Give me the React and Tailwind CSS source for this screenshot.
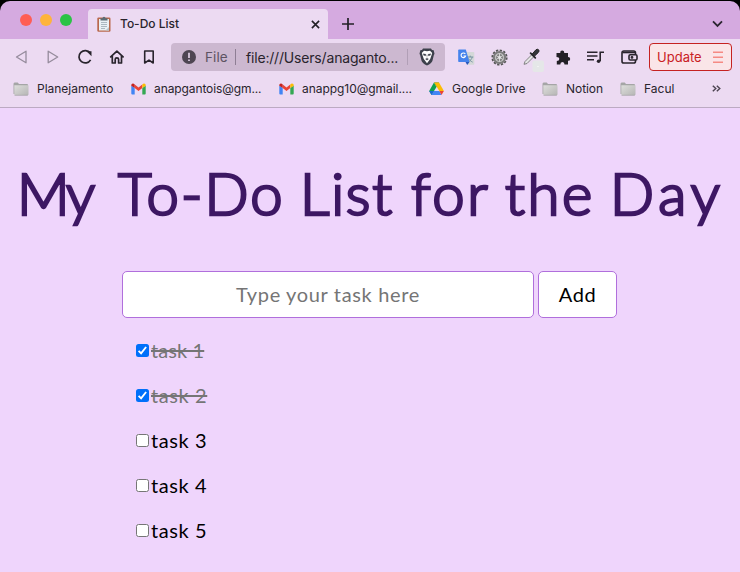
import React from "react";

const titleWords = [
  { text: "My", cls: "w-[101px] tracking-[-3px]" },
  { text: "To-Do", cls: "w-[182px] tracking-[2.1px]" },
  { text: "List", cls: "w-[111px] tracking-[1.8px]" },
  { text: "for", cls: "w-[94px] tracking-[2.6px]" },
  { text: "the", cls: "w-[105px] tracking-[2.6px]" },
  { text: "Day", cls: "w-[114px] tracking-[5px]" },
];

const tasks = [
  { text: "task 1", done: true },
  { text: "task 2", done: true },
  { text: "task 3", done: false },
  { text: "task 4", done: false },
  { text: "task 5", done: false },
];

function Clipboard() {
  return (
    <svg width="14" height="16" viewBox="0 0 14 16" className="shrink-0">
      <rect x=".3" y="1.5" width="13.2" height="14.2" rx="1.2" fill="#b9694d" />
      <path d="M2 3h10v11.5H2z" fill="#e9f0f4" />
      <path d="M8.5 14.5 12 11v3.5z" fill="#b9c5cb" />
      <path d="M3.5 4.5V2.2h2a1.5 1.5 0 0 1 3 0h2v2.3z" fill="#5c6d75" />
      <path d="M4 6.5h6M4 8.5h6M4 10.5h6M4 12.5h4" stroke="#9aaab2" strokeWidth=".8" />
    </svg>
  );
}

function Folder() {
  return (
    <svg width="16" height="14" viewBox="0 0 16 14" className="shrink-0">
      <defs>
        <linearGradient id="folder" x1="0" y1="0" x2="1" y2="1">
          <stop offset="0" stopColor="#dededc" />
          <stop offset="1" stopColor="#b5b5b4" />
        </linearGradient>
      </defs>
      <path d="M.5 2q0-1.5 1.2-1.5h3L6 2h8q1 0 1 1v9H.5z" fill="#a5a5a6" />
      <path d="M1.3 3.2h14.2v9q0 1-1 1H2.3q-1 0-1-1z" fill="url(#folder)" />
      <path d="M1.5 13.3h13.3" stroke="#99999a" strokeWidth=".6" />
    </svg>
  );
}

function Gmail() {
  return (
    <svg width="15" height="12" viewBox="0 0 15 12" className="shrink-0">
      <path d="M.3 2.5 3.7 5v6.4H1.2a.9.9 0 0 1-.9-.9z" fill="#4285f4" />
      <path d="M11.3 5l3.4-2.5v8a.9.9 0 0 1-.9.9h-2.5z" fill="#34a853" />
      <path d="M3.7 1.6 7.5 4.5l3.8-2.9V5L7.5 8 3.7 5z" fill="#ea4335" />
      <path d="M.3 2.5C.3.5 2.3-.1 3.7 1.6V5L.3 2.7z" fill="#c5221f" />
      <path d="M14.7 2.5c0-2-2-2.6-3.4-.9V5l3.4-2.3z" fill="#fbbc04" />
    </svg>
  );
}

function Drive() {
  return (
    <svg width="15" height="14" viewBox="0 0 15 14" className="shrink-0">
      <path d="M5 .5h5L7.5 5z" fill="#188038" />
      <path d="M5 .5 .2 9l2.3 4L7.5 5z" fill="#0fa14f" />
      <path d="M10 .5H5.1L10.3 9h4.6z" fill="#fcbc05" />
      <path d="M4.8 9h5.5l2.2 4h-10z" fill="#4285f4" />
      <path d="M10.3 9h4.6l-2.4 4z" fill="#ea4335" />
      <path d="M.2 9h4.7l-2.4 4z" fill="#1967d2" />
    </svg>
  );
}

function Translate() {
  return (
    <svg width="17" height="17" viewBox="0 0 17 17">
      <path d="M6 3h9.5q.8 0 .8.8V15q0 .8-.8.8H10z" fill="#d4d8d8" />
      <path d="M9.5 8h5.8M12.2 6.6V8m2 0c-.4 2.2-2 3.8-3.8 4.9M10.6 9.5c.8 1.6 2.2 2.8 4 3.6" stroke="#7593a0" fill="none" />
      <path d="M1 .5h6.8L11.5 13H1q-.8 0-.8-.8v-11Q.2.5 1 .5z" fill="#4583ec" />
      <path d="M7.5 13h4l-2.3 3z" fill="#2858bc" />
      <path d="M7.3 5A2.3 2.3 0 1 0 7.6 7H5.5" stroke="#fff" strokeWidth="1.1" fill="none" />
    </svg>
  );
}

function Gear() {
  return (
    <svg width="17" height="17" viewBox="0 0 17 17">
      <circle cx="8.5" cy="8.5" r="7.2" fill="none" stroke="#555" strokeWidth="1.8" strokeDasharray="2.3 1.47" />
      <circle cx="8.5" cy="8.5" r="5.6" fill="#c4c4c4" stroke="#7c7c7c" strokeWidth="2" />
      <circle cx="8.5" cy="8.5" r="3.1" fill="#868686" stroke="#6b6b6b" strokeWidth=".7" />
      <path d="M8.5 4.2v8.6M4.8 6.4l7.4 4.2m0-4.2-7.4 4.2" stroke="#d2d2d2" strokeWidth="1" />
      <circle cx="8.5" cy="8.5" r="1.4" fill="#e4e4e4" />
    </svg>
  );
}

function Dropper() {
  return (
    <svg width="22" height="24" viewBox="0 0 22 24">
      <rect x="9.5" y="12.5" width="11.5" height="11.5" rx="2" fill="#e5e7e8" />
      <circle cx="15" cy="18.5" r=".6" fill="#fff" />
      <path d="M1 16.3 2 13.5l7-7 2 2-7 7z" fill="#e5e5e6" stroke="#777" strokeWidth=".9" />
      <path d="m7.6 5.2 4.7 4.7" stroke="#26282b" strokeWidth="1.8" strokeLinecap="round" />
      <path d="m9.3 6 3.4-4q1.5-1.5 2.8-.3t-.2 2.8L11.6 8z" fill="#33363a" stroke="#222" />
    </svg>
  );
}

function Shield() {
  return (
    <svg width="16" height="18" viewBox="0 0 16 18" className="shrink-0">
      <path d="M4 .5h8l1 1.4 1.7.4.8 3.4-.7 1.6-1.4 5.6Q12.7 14.9 8 17.6 3.3 14.9 2.6 12.9L1.2 7.3.5 5.7l.8-3.4L3 1.9z" fill="#3c404b" />
      <path d="m5 2.7 3 .6 3-.6 2.2 2.2-.7 2.4-1.3 3.6L8 15.3l-3.2-4.4-1.3-3.6-.7-2.4z" fill="#fff" />
      <path d="m4.3 5.7 2.5.6.5 1-1.2.5-1.5-.6zM11.7 5.7l-2.5.6-.5 1 1.2.5 1.5-.6zM6.5 11 8 10.3l1.5.7L8 12.2zM8 7.4v2.8" fill="#3c404b" stroke="#3c404b" strokeWidth=".3" />
    </svg>
  );
}

function TabStrip() {
  return (
    <div className="flex h-[39px] bg-black">
      <div className="mt-px flex h-[38px] w-full rounded-t-[10px] bg-[#d5aae0]">
        <div className="flex gap-2 pt-[13px] pl-5">
          <span className="size-3 rounded-full bg-[#ff5d55]" />
          <span className="size-3 rounded-full bg-[#feb43c]" />
          <span className="size-3 rounded-full bg-[#2bc346]" />
        </div>
        <div className="mt-2 ml-4 flex h-[30px] w-60 items-center rounded-t bg-[#ecdaf2] pl-[9px]">
          <Clipboard />
          <span className="ml-[9px] w-[191px] text-[12px] font-medium tracking-[-0.02px]">To-Do List</span>
          <svg width="9" height="9" viewBox="0 0 9 9" className="shrink-0">
            <path d="m.9.9 7.2 7.2M8.1.9.9 8.1" stroke="#232026" strokeWidth="1.6" />
          </svg>
        </div>
        <svg width="12" height="12" viewBox="0 0 12 12" className="mt-[17px] ml-[14px]">
          <path d="M6 0v12M0 6h12" stroke="#232026" strokeWidth="1.7" />
        </svg>
        <svg width="11" height="8" viewBox="0 0 11 8" className="mt-[19px] mr-[17px] ml-auto">
          <path d="m1 1.4 4.5 4.5L10 1.4" stroke="#2b2530" strokeWidth="1.8" fill="none" />
        </svg>
      </div>
    </div>
  );
}

function Toolbar() {
  return (
    <div className="flex h-9 items-center text-[#29242d]">
      <svg width="154" height="36" viewBox="0 0 154 36" fill="none" className="mr-[17px] shrink-0">
        <path d="M26 12.2v11.6L16.5 18z" stroke="#958b9c" strokeWidth="1.3" strokeLinejoin="round" />
        <path d="M48.2 12.2v11.6l9.5-5.8z" stroke="#958b9c" strokeWidth="1.3" strokeLinejoin="round" />
        <path d="M90.2 14.1a6.2 6.2 0 1 0 .4 6.7" stroke="#29242d" strokeWidth="1.7" />
        <path d="M86.5 12.2h5v5z" fill="#29242d" />
        <path d="m110.7 17.8 6.2-5.7 6.2 5.7m-10.8-1v7.2h2.9v-3.7q0-1.4 1.7-1.4t1.7 1.4V24h2.9v-7.2" stroke="#29242d" strokeWidth="1.7" strokeLinejoin="round" strokeLinecap="round" />
        <path d="M144.7 12h8.5v12l-4.2-2.9-4.3 2.9z" stroke="#29242d" strokeWidth="1.6" strokeLinejoin="round" />
      </svg>
      <div className="flex h-7 w-[274px] shrink-0 items-center rounded bg-[#ccb8d0] pl-[11px]">
        <span className="flex size-[14px] shrink-0 items-center justify-center rounded-full bg-[#4e4652]">
          <svg width="4" height="10" viewBox="0 0 4 10">
            <path d="M2 .8v5.3M2 7.5v1.6" stroke="#d8c8dc" strokeWidth="1.8" />
          </svg>
        </span>
        <span className="ml-[9px] w-[30px] shrink-0 text-[13.5px] tracking-[0.1px] text-[#5d5362]">File</span>
        <span className="h-4 w-px shrink-0 bg-[#8e7e94]" />
        <span className="ml-[10px] w-[161px] shrink-0 text-[14px] tracking-[-0.18px] whitespace-nowrap">file:///Users/anaganto...</span>
        <span className="mr-[11px] h-4 w-px shrink-0 bg-[#b19fb6]" />
        <Shield />
      </div>
      <div className="ml-[13px] flex w-[187px] shrink-0 items-center">
        <Translate />
        <span className="ml-4"><Gear /></span>
        <span className="mt-[5px] ml-[15px]"><Dropper /></span>
        <svg width="16" height="15" viewBox="0 0 15 15" className="ml-[10px]">
          <path d="M1.5 3h3.2q-.2-2.4 2-2.4T8.8 3h3.7v4q2.2-.1 2.2 1.9t-2.2 1.9v3.7H9q.1-2.5-2.1-2.5t-2.1 2.5H1.3V11q2.5 0 2.5-2T1 7V3z" fill="#232026" />
        </svg>
        <svg width="17" height="13" viewBox="0 0 17 13" className="ml-4" fill="none" stroke="#29242d" strokeWidth="1.6">
          <path d="M0 1.2h10.5M0 5h10.5M0 8.8h7M13.2 10V1.2H17" />
          <circle cx="11.6" cy="10.3" r="1.8" fill="#29242d" stroke="none" />
        </svg>
        <svg width="17" height="14" viewBox="0 0 17 14" className="ml-[17px]" fill="none" stroke="#29242d" strokeWidth="1.6">
          <rect x="1" y="1" width="13.5" height="12" rx="1.8" />
          <path d="M1.5 2.5h13" />
          <rect x="8" y="4.8" width="8" height="5.2" rx="1.3" fill="#ecdaf2" />
          <circle cx="11" cy="7.4" r=".6" />
        </svg>
      </div>
      <div className="ml-1 flex h-7 w-[83px] shrink-0 items-center rounded border border-[#c52222] bg-[#fae5e8] pt-px pl-[7px] text-[13px] tracking-[0.02px] text-[#c9201f]">
        Update
        <svg width="10" height="13" viewBox="0 0 10 13" className="mr-2 ml-auto">
          <path d="M0 1.2h10M0 6.2h10M0 11.2h10" stroke="#f58a83" strokeWidth="1.5" />
        </svg>
      </div>
    </div>
  );
}

function Bookmark({ icon, text, cls }) {
  return (
    <div className={`flex shrink-0 items-center gap-2 ${cls}`}>
      {icon}
      <span className="whitespace-nowrap">{text}</span>
    </div>
  );
}

function Bookmarks() {
  return (
    <div className="flex h-[33px] items-center border-b border-[#bcaac2] pb-[5px] pl-[13px] text-[12px] text-[#29242d]">
      <Bookmark icon={<Folder />} text="Planejamento" cls="w-[117px] tracking-[-0.02px]" />
      <Bookmark icon={<Gmail />} text="anapgantois@gm..." cls="w-[148px] pl-px tracking-[-0.1px]" />
      <Bookmark icon={<Gmail />} text="anappg10@gmail...." cls="w-[150px] pl-px tracking-[-0.05px]" />
      <Bookmark icon={<Drive />} text="Google Drive" cls="w-[114px] pl-px tracking-[-0.02px]" />
      <Bookmark icon={<Folder />} text="Notion" cls="w-[78px] tracking-[-0.05px]" />
      <Bookmark icon={<Folder />} text="Facul" cls="w-[92px]" />
      <svg width="9" height="7" viewBox="0 0 9 7">
        <path d="m.8.7 3 2.8-3 2.8M4.8.7l3 2.8-3 2.8" stroke="#4c4351" strokeWidth="1.4" fill="none" />
      </svg>
    </div>
  );
}

export default function App() {
  return (
    <div className="h-[572px] w-[740px] overflow-hidden bg-[#efd5fc] font-['Inter',sans-serif] text-[#29242d]">
      <header className="bg-[#ecdaf2]">
        <TabStrip />
        <Toolbar />
        <Bookmarks />
      </header>
      <main className="font-['Lato',sans-serif]">
        <h1 className="mt-[47px] flex h-[76px] items-center pl-[17px] text-[58px] leading-[76px] font-light text-[#3d1763] [-webkit-text-stroke:2.7px_#3d1763]">
          {titleWords.map((w) => (
            <span key={w.text} className={`shrink-0 whitespace-nowrap ${w.cls}`}>{w.text}</span>
          ))}
        </h1>
        <div className="mt-10 ml-[122px] flex gap-1">
          <input
            placeholder="Type your task here"
            className="h-[47px] w-[412px] rounded-[5px] border border-[#b06fdc] bg-white pb-0.5 text-center text-[20px] tracking-[0.65px] placeholder:text-[#757575]"
          />
          <button className="h-[47px] w-[79px] rounded-[5px] border border-[#b06fdc] bg-white pb-0.5 text-[20px] tracking-[0.6px] text-black">Add</button>
        </div>
        <ul className="mt-[10px] ml-[136px]">
          {tasks.map((t) => (
            <li key={t.text} className="flex h-[45px] items-center gap-[2px]">
              <span
                className={`flex size-[13px] items-center justify-center rounded-[2.5px] ${t.done ? "bg-[#0070fa]" : "border border-[#767676] bg-white"}`}
              >
                {t.done && (
                  <svg width="11" height="11" viewBox="0 0 11 11">
                    <path d="m1.6 5.8 2.5 2.5 5-6.3" stroke="#fff" strokeWidth="1.9" fill="none" />
                  </svg>
                )}
              </span>
              <span className={`mb-0.5 text-[20px] leading-6 ${t.text === "task 1" ? "tracking-[0.1px]" : "tracking-[0.6px]"} ${t.done ? "text-[#757575] line-through" : "text-black"}`}>{t.text}</span>
            </li>
          ))}
        </ul>
      </main>
    </div>
  );
}
